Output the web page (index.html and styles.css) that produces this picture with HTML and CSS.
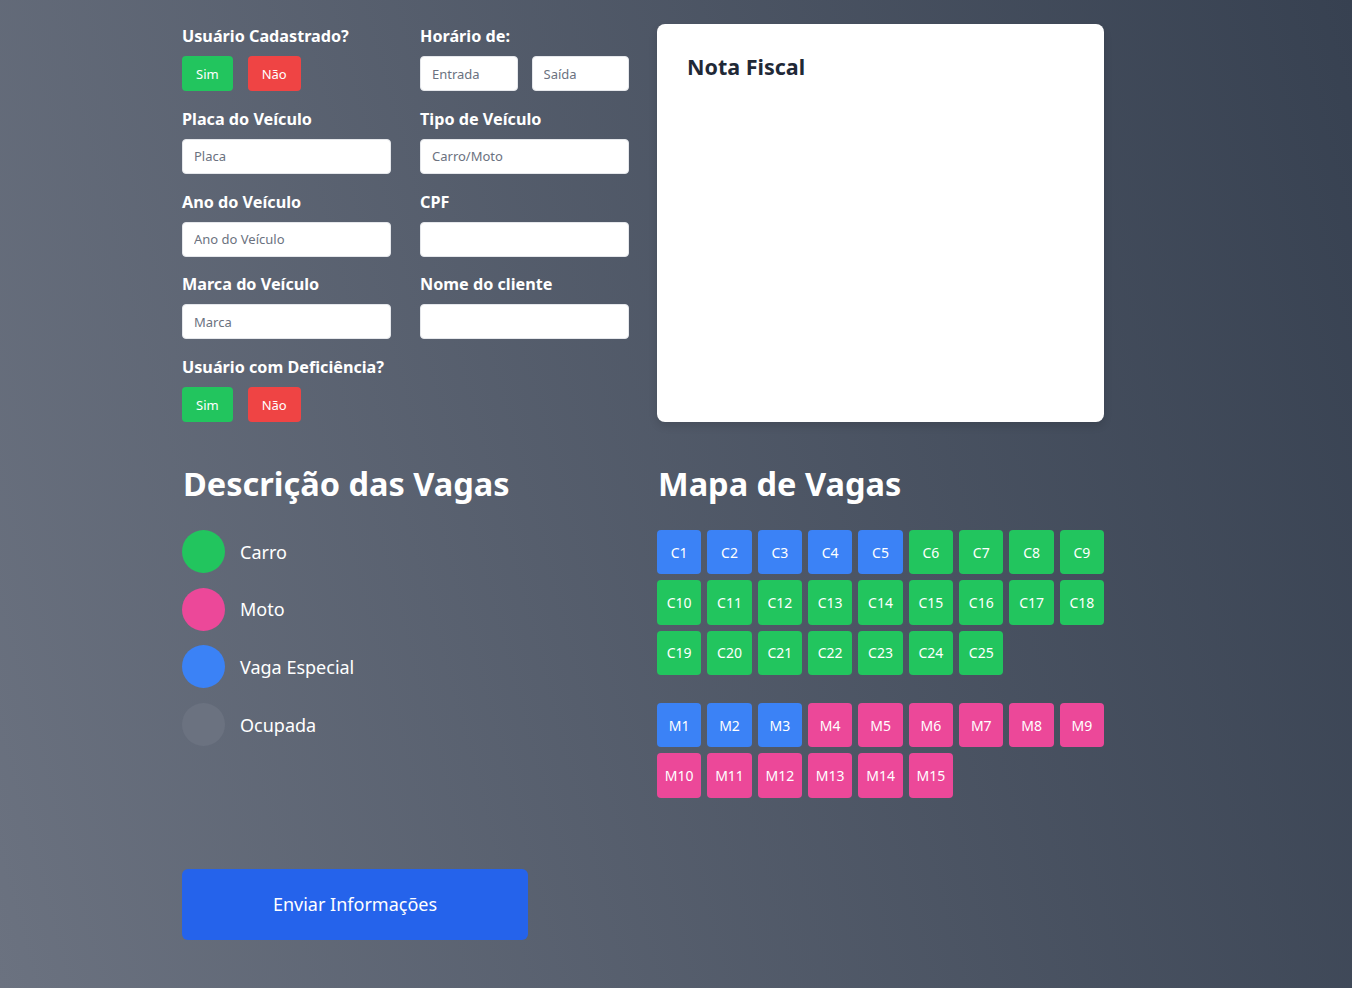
FILE: index.html
```html
<!DOCTYPE html>
<html lang="pt-BR">
<head>
<meta charset="utf-8">
<title>Estacionamento</title>
<link rel="stylesheet" href="styles.css">
</head>
<body>
<div class="page">
  <div class="top">
    <form class="form">
      <div class="field">
        <label class="label">Usuário Cadastrado?</label>
        <div class="btns">
          <button type="button" class="btn btn-sim">Sim</button>
          <button type="button" class="btn btn-nao">Não</button>
        </div>
      </div>
      <div class="field">
        <label class="label">Horário de:</label>
        <div class="pair">
          <input class="input" placeholder="Entrada">
          <input class="input" placeholder="Saída">
        </div>
      </div>
      <div class="field">
        <label class="label">Placa do Veículo</label>
        <input class="input" placeholder="Placa">
      </div>
      <div class="field">
        <label class="label">Tipo de Veículo</label>
        <input class="input" placeholder="Carro/Moto">
      </div>
      <div class="field">
        <label class="label">Ano do Veículo</label>
        <input class="input" placeholder="Ano do Veículo">
      </div>
      <div class="field">
        <label class="label">CPF</label>
        <input class="input">
      </div>
      <div class="field">
        <label class="label">Marca do Veículo</label>
        <input class="input" placeholder="Marca">
      </div>
      <div class="field">
        <label class="label">Nome do cliente</label>
        <input class="input">
      </div>
      <div class="field field-wide">
        <label class="label">Usuário com Deficiência?</label>
        <div class="btns">
          <button type="button" class="btn btn-sim">Sim</button>
          <button type="button" class="btn btn-nao">Não</button>
        </div>
      </div>
    </form>
    <div class="card">
      <h2 class="card-title">Nota Fiscal</h2>
    </div>
  </div>

  <div class="bottom">
    <div class="legend-col">
      <h1 class="heading">Descrição das Vagas</h1>
      <ul class="legend">
        <li class="legend-item"><span class="dot dot-carro"></span>Carro</li>
        <li class="legend-item"><span class="dot dot-moto"></span>Moto</li>
        <li class="legend-item"><span class="dot dot-esp"></span>Vaga Especial</li>
        <li class="legend-item"><span class="dot dot-ocup"></span>Ocupada</li>
      </ul>
    </div>
    <div class="map-col">
      <h1 class="heading">Mapa de Vagas</h1>
      <div class="grid">
        <div class="tile blue">C1</div><div class="tile blue">C2</div><div class="tile blue">C3</div><div class="tile blue">C4</div><div class="tile blue">C5</div>
        <div class="tile green">C6</div><div class="tile green">C7</div><div class="tile green">C8</div><div class="tile green">C9</div>
        <div class="tile green">C10</div><div class="tile green">C11</div><div class="tile green">C12</div><div class="tile green">C13</div><div class="tile green">C14</div><div class="tile green">C15</div><div class="tile green">C16</div><div class="tile green">C17</div><div class="tile green">C18</div>
        <div class="tile green">C19</div><div class="tile green">C20</div><div class="tile green">C21</div><div class="tile green">C22</div><div class="tile green">C23</div><div class="tile green">C24</div><div class="tile green">C25</div>
      </div>
      <div class="grid grid-moto">
        <div class="tile blue">M1</div><div class="tile blue">M2</div><div class="tile blue">M3</div>
        <div class="tile pink">M4</div><div class="tile pink">M5</div><div class="tile pink">M6</div><div class="tile pink">M7</div><div class="tile pink">M8</div><div class="tile pink">M9</div>
        <div class="tile pink">M10</div><div class="tile pink">M11</div><div class="tile pink">M12</div><div class="tile pink">M13</div><div class="tile pink">M14</div><div class="tile pink">M15</div>
      </div>
    </div>
  </div>

  <button type="button" class="submit">Enviar Informações</button>
</div>
</body>
</html>
```

FILE: styles.css
```css
* { box-sizing: border-box; }

html, body {
  margin: 0;
  min-height: 100%;
}

body {
  min-height: 100vh;
  font-family: "Noto Sans", "Open Sans", sans-serif;
  background: linear-gradient(75deg, #6b7280, #374151);
  color: #ffffff;
}

.page {
  width: 922px;
  margin-left: 182px;
  padding-top: 24px;
  padding-bottom: 40px;
}

.top {
  display: grid;
  grid-template-columns: 447px 447px;
  column-gap: 28px;
}

.form {
  display: grid;
  grid-template-columns: 209px 209px;
  column-gap: 29px;
  row-gap: 15.75px;
  align-content: start;
  margin: 0;
}

.field {
  display: flex;
  flex-direction: column;
}

.label {
  display: block;
  font-size: 16.2px;
  line-height: 24px;
  font-weight: 700;
  margin-bottom: 8px;
  white-space: nowrap;
}

.btns {
  display: flex;
  gap: 15px;
}

.btn {
  height: 35px;
  padding: 0 14px;
  border: none;
  border-radius: 4px;
  color: #ffffff;
  font-family: inherit;
  font-size: 13px;
}

.btn-sim { background: #22c55e; }
.btn-nao { background: #ef4444; }

.pair {
  display: flex;
  gap: 14px;
}

.pair .input {
  flex: 1;
  min-width: 0;
}

.input {
  width: 100%;
  height: 35px;
  padding: 0 11px;
  border: 1px solid #e5e7eb;
  border-radius: 4px;
  background: #ffffff;
  font-family: inherit;
  font-size: 13px;
  color: #374151;
}

.input::placeholder {
  color: #6b7280;
  opacity: 1;
}

.card {
  background: #ffffff;
  border-radius: 8px;
  padding: 29px 30px;
  box-shadow: 0 4px 8px rgba(0, 0, 0, 0.12);
}

.card-title {
  margin: 0;
  font-size: 21.5px;
  line-height: 28px;
  font-weight: 700;
  color: #1f2937;
}

.bottom {
  display: grid;
  grid-template-columns: 447px 447px;
  column-gap: 28px;
  margin-top: 44px;
}

.heading {
  margin: 0 0 28px 1px;
  font-size: 32.5px;
  line-height: 36px;
  font-weight: 700;
}

.legend {
  list-style: none;
  margin: 0;
  padding: 0;
  display: flex;
  flex-direction: column;
  gap: 14.7px;
}

.legend-item {
  display: flex;
  align-items: center;
  gap: 15px;
  font-size: 18px;
  line-height: 28px;
}

.dot {
  width: 43px;
  height: 43px;
  border-radius: 50%;
  flex: none;
}

.dot-carro { background: #22c55e; }
.dot-moto { background: #ec4899; }
.dot-esp { background: #3b82f6; }
.dot-ocup { background: #6b7280; }

.grid {
  display: grid;
  grid-template-columns: repeat(9, 1fr);
  gap: 6px;
}

.grid-moto {
  margin-top: 28px;
}

.tile {
  aspect-ratio: 1 / 1;
  display: flex;
  align-items: center;
  justify-content: center;
  border-radius: 4px;
  font-size: 14px;
  color: #ffffff;
}

.blue { background: #3b82f6; }
.green { background: #22c55e; }
.pink { background: #ec4899; }

.submit {
  display: block;
  margin-top: 71px;
  width: 346px;
  height: 71px;
  border: none;
  border-radius: 6px;
  background: #2563eb;
  color: #ffffff;
  font-family: inherit;
  font-size: 18px;
}
```
